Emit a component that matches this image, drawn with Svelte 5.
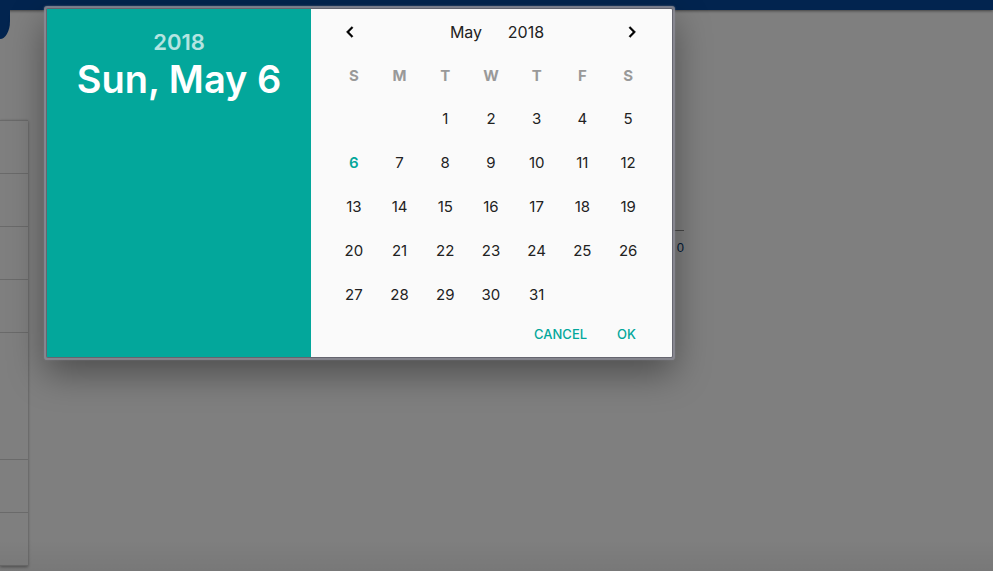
<script>
  const weekdays = ['S', 'M', 'T', 'W', 'T', 'F', 'S'];
  const names = ['Sunday', 'Monday', 'Tuesday', 'Wednesday', 'Thursday', 'Friday', 'Saturday'];
  const months = ['January', 'February', 'March', 'April', 'May', 'June', 'July', 'August', 'September', 'October', 'November', 'December'];
  const years = [2016, 2017, 2018, 2019, 2020];
  const weeks = Array.from({ length: 5 }, (_, w) =>
    Array.from({ length: 7 }, (_, d) => {
      const day = w * 7 + d - 1;
      return day > 0 && day <= 31 ? day : null;
    })
  );
  const rows = ['row', 'row', 'row', 'row', 'row tall', 'row', 'row'];
  let selected = $state(6);
  let month = $state('May');
  let year = $state(2018);
  let weekday = $derived(names[(selected + 1) % 7].slice(0, 3));
</script>

<div class="page">
  <header><div class="badge"></div></header>
  <main>
    <div class="list">
      {#each rows as row}<div class={row}></div>{/each}
    </div>
    <div class="counter">0</div>
  </main>
  <div class="foot"></div>

  <div class="overlay">
    <div class="modal" role="dialog" aria-label="Choose a date">
      <section class="summary">
        <div class="year">{year}</div>
        <div class="date">{weekday}, {month.slice(0, 3)} {selected}</div>
      </section>
      <section class="calendar">
        <div class="controls">
          <button class="arrow" aria-label="Previous month">
            <svg width="24" height="24" viewBox="0 0 24 24"><path d="M15.41 7.41 14 6l-6 6 6 6 1.41-1.41L10.83 12z" /></svg>
          </button>
          <div class="selects">
            <select class="month" aria-label="Month" bind:value={month}>
              {#each months as m}<option>{m}</option>{/each}
            </select>
            <select class="years" aria-label="Year" bind:value={year}>
              {#each years as y}<option value={y}>{y}</option>{/each}
            </select>
          </div>
          <button class="arrow" aria-label="Next month">
            <svg width="24" height="24" viewBox="0 0 24 24"><path d="M10 6 8.59 7.41 13.17 12l-4.58 4.59L10 18l6-6z" /></svg>
          </button>
        </div>
        <table>
          <thead>
            <tr>{#each weekdays as d, i}<th scope="col" abbr={names[i]}>{d}</th>{/each}</tr>
          </thead>
          <tbody>
            {#each weeks as week}
              <tr>
                {#each week as day}
                  <td>
                    {#if day}
                      <button class="day" class:selected={day === selected} onclick={() => (selected = day)}>{day}</button>
                    {/if}
                  </td>
                {/each}
              </tr>
            {/each}
          </tbody>
        </table>
        <div class="actions">
          <button>CANCEL</button>
          <button>OK</button>
        </div>
      </section>
    </div>
  </div>
</div>

<style>
  .page {
    position: relative;
    display: flex;
    flex-direction: column;
    min-height: 100vh;
    overflow: hidden;
    background: #fff;
    font-family: Inter, 'Liberation Sans', sans-serif;
    color: #222;
  }
  header {
    height: 10px;
    background: #04489e;
    box-shadow: 0 1px 3px rgba(0, 0, 0, 0.5);
  }
  .badge {
    width: 10px;
    height: 39px;
    background: #04489e;
    border-bottom-right-radius: 10px 18px;
  }
  main {
    display: flex;
    align-items: flex-start;
    padding-top: 110px;
  }
  .list {
    width: 28px;
    border-top: 1px solid #d4d4d4;
    box-shadow: 0 1px 3px rgba(0, 0, 0, 0.4);
  }
  .row {
    box-sizing: border-box;
    height: 53px;
    border-bottom: 1px solid #d4d4d4;
  }
  .tall {
    height: 127px;
  }
  .counter {
    box-sizing: border-box;
    width: 600px;
    margin: 110px 0 0 56px;
    padding-top: 9px;
    border-top: 1px solid #909090;
    color: #04386e;
    font-family: 'Liberation Sans', sans-serif;
    font-size: 13px;
    line-height: 16px;
    text-align: right;
  }
  .foot {
    position: absolute;
    inset: auto 0 0;
    height: 32px;
    background: linear-gradient(transparent, rgba(0, 0, 0, 0.06));
  }
  .overlay {
    position: absolute;
    inset: 0;
    padding: 9px 47px;
    background: rgba(0, 0, 0, 0.5);
  }
  .modal {
    display: flex;
    max-width: 625px;
    border-radius: 1px;
    background: #fafafa;
    box-shadow: 0 0 0 1px rgba(85, 85, 95, 0.65), 0 0 0 3px rgba(140, 140, 150, 0.7), 0 0 2px 3px rgba(132, 132, 139, 0.7), 0 14px 36px 2px rgba(0, 0, 0, 0.4);
  }
  .summary {
    flex: 0 0 264px;
    box-sizing: border-box;
    padding-top: 20px;
    background: #03a79b;
    color: #fff;
    text-align: center;
    font-weight: 600;
  }
  .year {
    font-size: 22px;
    line-height: 26px;
    opacity: 0.7;
  }
  .date {
    font-size: 38px;
    line-height: 48px;
    white-space: nowrap;
  }
  .calendar {
    flex: 1;
    min-width: 0;
    padding: 0 21px 0 20px;
  }
  button,
  select {
    margin: 0;
    padding: 0;
    border: 0;
    background: none;
    color: inherit;
    font: inherit;
    cursor: pointer;
  }
  .controls {
    display: flex;
    justify-content: space-between;
    height: 45px;
    padding: 0 7px;
  }
  .arrow {
    display: flex;
    align-items: center;
    color: #000;
  }
  .arrow svg {
    fill: currentColor;
    stroke: currentColor;
    stroke-width: 0.5;
    transform: scale(0.9);
  }
  .selects {
    display: flex;
    align-items: center;
    gap: 12px;
    padding-left: 12px;
  }
  select {
    appearance: none;
    text-align: center;
    font-size: 16px;
    line-height: 24px;
  }
  .month {
    width: 46px;
  }
  .years {
    width: 50px;
  }
  table {
    width: 100%;
    table-layout: fixed;
    border-collapse: collapse;
    font-size: 15px;
  }
  th,
  td {
    height: 44px;
    padding: 0;
    text-align: center;
  }
  th {
    height: 43px;
    color: #999;
    font-weight: 700;
  }
  .day {
    display: block;
    width: 100%;
    height: 44px;
    padding-bottom: 2px;
  }
  .selected {
    color: #03a79b;
    font-weight: 600;
  }
  .actions {
    display: flex;
    justify-content: flex-end;
    gap: 30px;
    height: 40px;
    padding-right: 15px;
    color: #03a79b;
    font-size: 13px;
    font-weight: 500;
  }
  .actions button {
    height: 34px;
  }
</style>
